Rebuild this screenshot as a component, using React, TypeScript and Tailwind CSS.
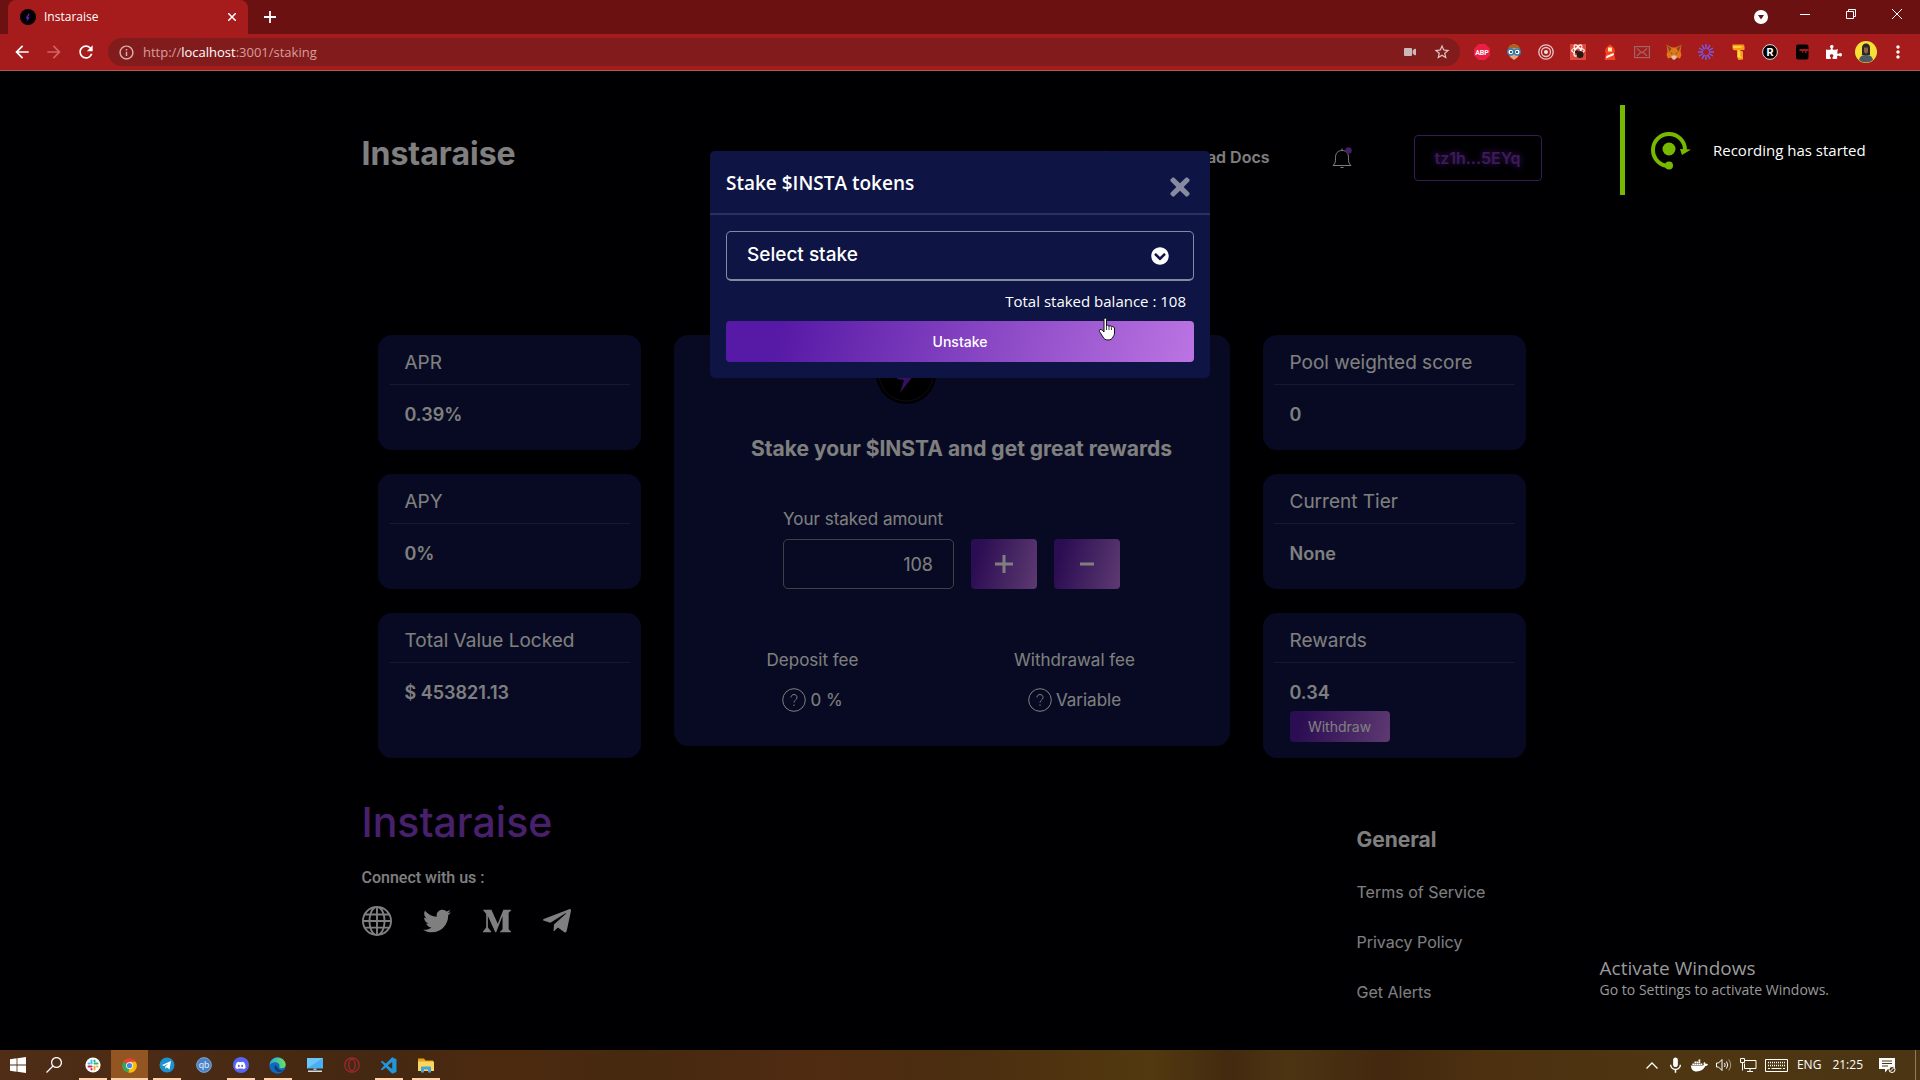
import {useState} from "react";
import type {ReactNode} from "react";

import {BsGlobe} from "react-icons/bs";
import {
  FaChevronCircleDown,
  FaDiscord,
  FaDocker,
  FaMediumM,
  FaPuzzlePiece,
  FaTelegramPlane,
  FaTimes,
  FaTwitter,
  FaVideo,
} from "react-icons/fa";
import {MdArrowBack, MdArrowForward, MdInfoOutline, MdMic, MdMoreVert, MdRefresh, MdStarBorder} from "react-icons/md";

const gradient = "bg-[linear-gradient(105deg,#571aa6_12%,#bb74e2_100%)]";

const extensions: {name: string; icon: ReactNode}[] = [
  {
    name: "Adblock Plus",
    icon: (
      <svg viewBox="0 0 16 16" className="size-4">
        <path d="M4.7 0h6.6L16 4.7v6.6L11.3 16H4.7L0 11.3V4.7z" fill="#ed1e45" />
        <text x="8" y="10.6" textAnchor="middle" fontSize="7" fontWeight="700" fill="#fff" fontFamily="Roboto">
          ABP
        </text>
      </svg>
    ),
  },
  {
    name: "Reader",
    icon: (
      <svg viewBox="0 0 16 16" className="size-4">
        <path d="M2.5 8C2 3 4 .5 8 .5S14 3 13.500 8L12 13l-4 3-4-3z" fill="#e5a878" />
        <path d="M2 7C1.500 2.500 4 .5 8 .5S14.500 2.500 14 7L12 4 6 4.500z" fill="#a5641f" />
        <circle cx="4.700" cy="8" r="3" fill="#fff" stroke="#2d7fb8" strokeWidth="1.500" />
        <circle cx="11.300" cy="8" r="3" fill="#fff" stroke="#2d7fb8" strokeWidth="1.500" />
        <circle cx="5" cy="8" r="1" fill="#123" />
        <circle cx="11" cy="8" r="1" fill="#123" />
      </svg>
    ),
  },
  {
    name: "Target",
    icon: (
      <svg viewBox="0 0 16 16" className="size-4" fill="none" stroke="#e8c6c6" strokeWidth="1.300">
        <circle cx="8" cy="8" r="7.200" />
        <circle cx="8" cy="8" r="4.500" />
        <circle cx="8" cy="8" r="2" fill="#f3dede" stroke="none" />
      </svg>
    ),
  },
  {
    name: "Debugger",
    icon: (
      <svg viewBox="0 0 16 16" className="size-4">
        <rect width="16" height="16" fill="#dc4a3c" />
        <g fill="none" stroke="#fff" strokeWidth="1.200">
          <ellipse cx="8" cy="6.500" rx="6.300" ry="2.500" />
          <ellipse cx="8" cy="6.500" rx="6.300" ry="2.500" transform="rotate(60 8 6.500)" />
          <ellipse cx="8" cy="6.500" rx="6.300" ry="2.500" transform="rotate(120 8 6.500)" />
        </g>
        <circle cx="10" cy="10.500" r="3.500" fill="#2b1512" />
        <circle cx="6.500" cy="8" r="1.700" fill="#2b1512" />
      </svg>
    ),
  },
  {
    name: "Lighthouse",
    icon: (
      <svg viewBox="0 0 16 16" className="size-4">
        <path d="M3.500 4.500 8 .3l4.500 4.200V6.500h.5v2h-1l1.500 7.500h-11L4 8.500H3v-2h.5z" fill="#f4431f" />
        <rect x="6" y="3.500" width="4" height="4" fill="#ffe9a8" />
        <path d="m4.500 12 7-3 .4 2-7.800 3.600z" fill="#fff" />
      </svg>
    ),
  },
  {
    name: "Mail",
    icon: (
      <svg viewBox="0 0 16 16" className="size-4" fill="none" stroke="#a06467" strokeWidth="1.200">
        <rect x=".6" y="2.600" width="14.800" height="11" />
        <path d="m3 4.500 5 4.500 5-4.500M3 12l3.500-3.500M13 12 9.500 8.500" />
      </svg>
    ),
  },
  {
    name: "MetaMask",
    icon: (
      <svg viewBox="0 0 16 16" className="size-4">
        <path d="m.5.5 5.500 3h4l5.500-3-1 7 1 3.500-1.500 3.500-3.500-1L9 15.500H7l-1.500-2-3.500 1L.5 11l1-3.500z" fill="#e2761b" />
        <path d="m.5.5 5 4-2 3.500zM15.500.5l-5 4 2 3.500z" fill="#8a4a20" />
        <path d="m5 13 1.500-1.500h3L11 13l-2 2.500H7z" fill="#d9c3b3" />
        <path d="m4 8.500 2 .5.500 1.300zM12 8.500 10 9l-.5 1.300z" fill="#233447" />
      </svg>
    ),
  },
  {
    name: "Loom",
    icon: (
      <svg viewBox="0 0 16 16" className="size-4" stroke="#735cf5">
        <path d="M8 0v5M8 11v5M0 8h5M11 8h5" strokeWidth="1.400" />
        <path d="M4 1l2.500 4.400M9.500 10.600 12 15M12 1 9.500 5.400M6.500 10.600 4 15M1 4l4.400 2.500M10.600 9.500 15 12M1 12l4.400-2.500M10.600 6.500 15 4" strokeWidth="1.400" />
      </svg>
    ),
  },
  {
    name: "Temple",
    icon: (
      <svg viewBox="0 0 16 16" className="size-4">
        <path d="M2.500.5h11l1 1.500v4h-4v.5l2.500 1v8l-4.500.5-1.500-3V6.500L3.500 6l-1-1.500z" fill="#fb9b1c" />
        <path d="M3 3h8.500M8.500 6v6.500l3 1M9.500 7.500v5" stroke="#ffe04a" strokeWidth="1.300" fill="none" />
      </svg>
    ),
  },
  {
    name: "Rarity",
    icon: (
      <svg viewBox="0 0 16 16" className="size-4">
        <circle cx="8" cy="8" r="7.400" fill="#000" stroke="#e7d7d7" strokeWidth="1" />
        <text x="8" y="12" textAnchor="middle" fontSize="11" fontWeight="700" fill="#fff" fontFamily="Roboto">
          R
        </text>
      </svg>
    ),
  },
  {
    name: "Notes",
    icon: (
      <svg viewBox="0 0 16 16" className="size-4">
        <rect x="2" y=".5" width="12.500" height="15" rx="2" fill="#050202" />
        <path d="M5.500 5h9v2h-2v2h-1.500V7H9.500v1.500H8V7H5.500z" fill="#a01c1c" />
      </svg>
    ),
  },
];

const pinned: {name: string; open?: boolean; active?: boolean; icon: ReactNode}[] = [
  {
    name: "Slack",
    open: true,
    icon: (
      <svg viewBox="0 0 16 16" className="size-4">
        <circle cx="8" cy="8" r="7.600" fill="#fff" />
        <g strokeWidth="2" strokeLinecap="round">
          <path d="M6.500 3.500v3" stroke="#36c5f0" />
          <path d="M3.500 6.500h1" stroke="#36c5f0" />
          <path d="M9.500 6.500h3" stroke="#2eb67d" />
          <path d="M9.500 3.500v1" stroke="#2eb67d" />
          <path d="M9.500 9.500v3" stroke="#ecb22e" />
          <path d="M12 9.500h.5" stroke="#ecb22e" />
          <path d="M3.500 9.500h3" stroke="#e01e5a" />
          <path d="M6.500 12v.5" stroke="#e01e5a" />
        </g>
      </svg>
    ),
  },
  {
    name: "Chrome",
    open: true,
    active: true,
    icon: (
      <svg viewBox="0 0 16 16" className="size-[15px]">
        <path d="M8 8 1.500 4A7.600 7.600 0 0 1 14.600 4z" fill="#ea4335" />
        <path d="M8 8 1.400 4A7.600 7.600 0 0 0 7 15.600z" fill="#34a853" />
        <path d="M8 8V4h6.600A7.600 7.600 0 0 1 7 15.600z" fill="#fbbc05" />
        <circle cx="8" cy="8" r="3.600" fill="#fff" />
        <circle cx="8" cy="8" r="2.800" fill="#4285f4" />
      </svg>
    ),
  },
  {
    name: "Telegram",
    open: true,
    icon: (
      <svg viewBox="0 0 16 16" className="size-4">
        <circle cx="8" cy="8" r="7.500" fill="#1c93cf" />
        <path d="m3 8 9-4-1.500 8.500-2.700-2-1.300 1.300-.3-2.300L9.500 6.500 5 9z" fill="#fff" />
      </svg>
    ),
  },
  {
    name: "qBittorrent",
    icon: (
      <svg viewBox="0 0 16 16" className="size-4">
        <circle cx="8" cy="8" r="7.400" fill="#4a82c8" stroke="#8fb4e0" strokeWidth=".8" />
        <text x="8" y="11" textAnchor="middle" fontSize="9.500" fill="#dfeaf8" fontFamily="Lato">
          qb
        </text>
      </svg>
    ),
  },
  {
    name: "Discord",
    open: true,
    icon: (
      <span className="flex size-4 items-center justify-center rounded-full bg-[#5865f2] text-white">
        <FaDiscord size={11} />
      </span>
    ),
  },
  {
    name: "Edge",
    open: true,
    icon: (
      <svg viewBox="0 0 16 16" className="size-[17px]">
        <defs>
          <linearGradient id="edgeTop" x1="0" y1="0" x2="1" y2="0">
            <stop offset="0" stopColor="#2aa6e0" />
            <stop offset="1" stopColor="#6be35a" />
          </linearGradient>
        </defs>
        <circle cx="8" cy="8" r="7.700" fill="#1268bd" />
        <path d="M.4 7.500A7.700 7.700 0 0 1 15.700 7c0 3-2.500 4-5 3.500-1.500-.4-1-1.200-.7-2C10 6.500 8 5 6 5 3 5 1 6.500.4 7.500z" fill="url(#edgeTop)" />
        <path d="M6 7.500C4.500 9.500 5 13 9 14c2.500.5 4.500-.5 5.500-2-2.500 1-5.500.5-6-1.500z" fill="#0b3f7d" />
      </svg>
    ),
  },
  {
    name: "This PC",
    icon: (
      <svg viewBox="0 0 16 16" className="size-4">
        <rect x="0" y="1" width="16" height="10.500" fill="#46b0f2" />
        <path d="M0 11.500 16 1H0z" fill="#6cc6fa" />
        <path d="M6.500 11.500h3V13h-3z" fill="#aab8c2" />
        <path d="M1 13.500h14V15H1z" fill="#d5dde2" />
      </svg>
    ),
  },
  {
    name: "Opera",
    icon: (
      <svg viewBox="0 0 16 16" className="size-4" fill="none" stroke="#a92734" strokeWidth="1.200">
        <circle cx="8" cy="8" r="7.200" />
        <ellipse cx="8" cy="8" rx="3.200" ry="5.600" />
      </svg>
    ),
  },
  {
    name: "Visual Studio Code",
    open: true,
    icon: (
      <svg viewBox="0 0 16 16" className="size-[17px]">
        <path d="M11.500.3 15.500 2v12l-4 1.700L5.500 9.900 2 12.500.7 11.700 4 8 .7 4.300 2 3.500l3.500 2.600zM11.500 4.600 7.300 8l4.200 3.400z" fill="#2196dc" fillRule="evenodd" />
      </svg>
    ),
  },
  {
    name: "File Explorer",
    open: true,
    icon: (
      <svg viewBox="0 0 16 16" className="size-4">
        <path d="M0 1.500h6l1.500 2H15V6H0z" fill="#e5a316" />
        <path d="M0 4.500h16V14H0z" fill="#fbd65f" />
        <path d="M3 15.500V10.500Q3 9.500 4 9.500h8q1 0 1 1v5h-3V12.500H6v3z" fill="#45a3dd" />
      </svg>
    ),
  },
];

const socials = [
  {name: "Website", icon: <BsGlobe size={30} />},
  {name: "Twitter", icon: <FaTwitter size={28} />},
  {name: "Medium", icon: <FaMediumM size={30} />},
  {name: "Telegram", icon: <FaTelegramPlane size={32} />},
];

function BrowserBar() {
  return (
    <header className="font-['Open_Sans',sans-serif] text-white">
      <div className="flex h-[34px] items-center bg-[#6b1111] pl-2">
        <div className="flex h-full w-60 items-center rounded-t-lg bg-[#a61c1c] px-3">
          <Bolt className="size-4" />
          <span className="ml-2 flex-1 text-xs">Instaraise</span>
          <button aria-label="Close tab">
            <svg viewBox="0 0 8 8" className="size-2" stroke="currentColor" strokeWidth="1.500">
              <path d="m0 0 8 8M8 0 0 8" />
            </svg>
          </button>
        </div>
        <button aria-label="New tab" className="ml-4">
          <svg viewBox="0 0 12 12" className="size-3" stroke="currentColor" strokeWidth="1.800">
            <path d="M6 0v12M0 6h12" />
          </svg>
        </button>
        <button aria-label="Search tabs" className="mr-8 ml-auto">
          <svg viewBox="0 0 14 14" className="size-3.5">
            <circle cx="7" cy="7" r="7" fill="#fff" />
            <path d="M4 5h6L7 9.500z" fill="#6b1111" />
          </svg>
        </button>
        <div className="mr-[18px] mb-[6px] flex gap-9">
          <button aria-label="Minimize">
            <svg viewBox="0 0 10 10" className="size-2.5" stroke="currentColor">
              <path d="M0 5.500h10" />
            </svg>
          </button>
          <button aria-label="Restore">
            <svg viewBox="0 0 10 10" className="size-2.5" fill="none" stroke="currentColor">
              <path d="M.5 2.500h7v7h-7zM2.500 2.500v-2h7v7h-2" />
            </svg>
          </button>
          <button aria-label="Close">
            <svg viewBox="0 0 10 10" className="size-2.5" stroke="currentColor">
              <path d="m0 0 10 10M10 0 0 10" />
            </svg>
          </button>
        </div>
      </div>
      <div className="flex h-[37px] items-center border-b border-[#b4574f] bg-[#a61c1c] pl-3">
        <button aria-label="Back">
          <MdArrowBack size={20} />
        </button>
        <button aria-label="Forward" className="ml-3 text-[#d06464]">
          <MdArrowForward size={20} />
        </button>
        <button aria-label="Reload" className="ml-3">
          <MdRefresh size={20} />
        </button>
        <div className="ml-3 flex h-7 flex-1 items-center rounded-full bg-[#821c1c] pr-[9px] pl-2.5">
          <MdInfoOutline size={17} className="text-[#d9b3b3]" />
          <div
            role="textbox"
            aria-label="Address"
            contentEditable
            suppressContentEditableWarning
            className="ml-2 flex-1 text-[13px] leading-5 text-[#d99d9d] outline-none"
          >
            http://<span className="text-white">localhost</span>:3001/staking
          </div>
          <FaVideo size={12} className="mr-[17px] text-[#cbb9b9]" />
          <MdStarBorder size={18} className="text-[#e0c5c5]" />
        </div>
        <div className="ml-[14px] flex items-center gap-4">
          {extensions.map((ext) => (
            <button key={ext.name} aria-label={ext.name}>
              {ext.icon}
            </button>
          ))}
          <button aria-label="Extensions">
            <FaPuzzlePiece size={16} />
          </button>
        </div>
        <button aria-label="Profile" className="ml-[13px]">
          <svg viewBox="0 0 22 22" className="size-[22px]">
            <circle cx="11" cy="11" r="11" fill="#f6df36" />
            <path d="M4 19c1-4 3-5 7-5s6 1 7 5a11 11 0 0 1-14 0z" fill="#4d5a63" />
            <path d="M7 14V7c0-3 1.500-4.500 4-4.500S15 4 15 7v7z" fill="#2d2521" />
            <path d="M9 6.500h4V11l-2 2-2-2z" fill="#8b6248" />
          </svg>
        </button>
        <button aria-label="Menu" className="mr-3 ml-[11px]">
          <MdMoreVert size={20} />
        </button>
      </div>
    </header>
  );
}

function Bolt({className}: {className: string}) {
  return (
    <svg viewBox="0 0 60 60" className={className}>
      <circle cx="30" cy="30" r="30" fill="#000" />
      <circle cx="30" cy="30" r="27" fill="none" stroke="#1f1830" strokeWidth="1" />
      <path d="M33 16 21 35l7 1-4 13 13-17-7-1 6-11z" fill="#6a22c4" />
    </svg>
  );
}

function StatCard({title, value, children}: {title: string; value: string; children?: ReactNode}) {
  return (
    <section className="min-h-[115px] rounded-[14px] bg-[#0e1444] px-[11px] last:min-h-[145px]">
      <h3 className="border-b border-[#2b3060] px-4 pt-3.5 pb-[7px] text-[19px] leading-7">{title}</h3>
      <div className="px-4 pt-4">
        <p className="text-lg leading-7 font-semibold">{value}</p>
        {children}
      </div>
    </section>
  );
}

function Fee({label, value}: {label: string; value: string}) {
  return (
    <div className="flex flex-1 flex-col items-center gap-4">
      <p>{label}</p>
      <p className="flex items-center gap-1">
        <svg viewBox="0 0 24 24" className="size-6" fill="none" stroke="currentColor">
          <circle cx="12" cy="12" r="11.300" />
          <path d="M9 9.500c0-4 6-4 6 0 0 2.500-3 2.500-3 5M12 16.500v1.500" />
        </svg>
        {value}
      </p>
    </div>
  );
}

function StakingPage() {
  return (
    <div className="pr-[17px] font-[Inter,sans-serif] text-white">
      <div className="mx-auto max-w-[1180px]">
        <div className="flex items-start justify-between pt-16">
          <h1 className="text-[32px] leading-[38px] font-bold">Instaraise</h1>
          <nav className="flex h-[46px] items-center gap-[60px] font-semibold">
            <a href="#pools" className="pb-0.5">
              Pools
            </a>
            <a href="#staking" className="pb-0.5 text-[#9a4fe0]">
              Staking
            </a>
            <a href="#docs" className="pb-0.5">
              Read Docs
            </a>
            <button aria-label="Notifications" className="flex w-6 justify-center">
              <svg viewBox="0 0 20 22" className="h-[22px] w-5" fill="none" stroke="currentColor">
                <path d="M1 18.500h18c-2.500-2-2.500-4-2.500-8 0-4.500-2.500-7-6.500-7s-6.500 2.500-6.500 7c0 4 0 6-2.500 8zM10 3.500v-2M8.500 20.500h3" />
                <circle cx="16.500" cy="3.500" r="3.200" fill="#8a3fd0" stroke="none" />
              </svg>
            </button>
            <button className="h-[46px] w-32 rounded border border-[#6c36a8] text-[#7a35b5] [text-shadow:0_0_6px_#7a2fc4]">
              tz1h...5EYq
            </button>
          </nav>
        </div>

        <main className="mt-[154px] flex items-start gap-[33px] px-4">
          <div className="flex w-[263px] flex-col gap-6">
            <StatCard title="APR" value="0.39%" />
            <StatCard title="APY" value="0%" />
            <StatCard title="Total Value Locked" value="$ 453821.13" />
          </div>
          <section className="flex flex-1 flex-col rounded-[14px] bg-[#0e1444] px-2 pt-[9px] pb-[34px]">
            <div className="flex items-start justify-center gap-2">
              <Bolt className="size-[60px]" />
              <span className="mt-2 leading-7">Compound</span>
            </div>
            <h2 className="mt-[31px] pl-5 text-center text-[21px] leading-7 font-bold">
              Stake your $INSTA and get great rewards
            </h2>
            <div className="mx-auto mt-11">
              <label htmlFor="amount" className="block text-[17px] leading-6">
                Your staked amount
              </label>
              <div className="mt-2 flex gap-[17px]">
                <input
                  id="amount"
                  readOnly
                  value="108"
                  className="h-[50px] w-[171px] rounded-[5px] border border-[#80838f] pr-5 text-right text-lg"
                />
                <button aria-label="Stake more" className={`${gradient} flex h-[50px] w-[66px] items-center justify-center rounded`}>
                  <svg viewBox="0 0 18 18" className="size-[18px]" stroke="currentColor" strokeWidth="3">
                    <path d="M9 0v18M0 9h18" />
                  </svg>
                </button>
                <button aria-label="Unstake" className={`${gradient} flex h-[50px] w-[66px] items-center justify-center rounded`}>
                  <svg viewBox="0 0 18 18" className="size-[18px]" stroke="currentColor" strokeWidth="3">
                    <path d="M2 9h14" />
                  </svg>
                </button>
              </div>
            </div>
            <div className="mt-[59px] mr-4 flex text-[17px] leading-6">
              <Fee label="Deposit fee" value="0 %" />
              <Fee label="Withdrawal fee" value="Variable" />
            </div>
          </section>
          <div className="flex w-[263px] flex-col gap-6">
            <StatCard title="Pool weighted score" value="0" />
            <StatCard title="Current Tier" value="None" />
            <StatCard title="Rewards" value="0.34">
              <button className={`${gradient} mt-1 h-[31px] w-[100px] rounded text-sm`}>Withdraw</button>
            </StatCard>
          </div>
        </main>

        <footer className="flex justify-between pt-11">
          <div>
            <p className="text-[41px] leading-10 font-medium text-[#9040d8]">Instaraise</p>
            <p className="mt-6 font-[Roboto,sans-serif] font-medium">Connect with us :</p>
            <div className="mt-[15px] flex items-center gap-[30px]">
              {socials.map((social) => (
                <a key={social.name} href="#social" aria-label={social.name} className="flex w-[30px] justify-center">
                  {social.icon}
                </a>
              ))}
            </div>
          </div>
          <div className="w-[185px] pt-6">
            <h4 className="text-[21px] leading-7 font-bold">General</h4>
            <ul className="mt-[26px] flex flex-col gap-[26px]">
              <li>
                <a href="#terms">Terms of Service</a>
              </li>
              <li>
                <a href="#privacy">Privacy Policy</a>
              </li>
              <li>
                <a href="#alerts">Get Alerts</a>
              </li>
            </ul>
          </div>
        </footer>
      </div>
    </div>
  );
}

function UnstakeModal({onClose}: {onClose: () => void}) {
  return (
    <div className="absolute inset-0 flex items-start justify-center bg-black/50 pt-20">
      <div role="dialog" aria-labelledby="modal-title" className="relative w-[500px] rounded-[5px] bg-[#0e1444] text-white">
        <div className="flex items-center justify-between border-b-2 border-[#2b3060] px-4 pt-5 pb-2.5">
          <h2 id="modal-title" className="pb-2 font-['Open_Sans',sans-serif] text-[19px] leading-6 font-semibold">
            Stake $INSTA tokens
          </h2>
          <button aria-label="Close" onClick={onClose} className="text-[#878aa1]">
            <FaTimes size={28} />
          </button>
        </div>
        <div className="px-4 pt-4 pb-4">
          <button className="flex h-[50px] w-full items-center justify-between rounded-[5px] border border-b-2 border-[#868a9e] pr-6 pl-5 font-[Inter,sans-serif] text-[19px] font-medium">
            Select stake
            <FaChevronCircleDown size={18} />
          </button>
          <p className="mt-2 mb-2 pr-2 text-right font-['Open_Sans',sans-serif] text-[15px] leading-6">
            Total staked balance : 108
          </p>
          <button className={`${gradient} h-[41px] w-full rounded font-[Inter,sans-serif] text-sm font-medium`}>
            Unstake
          </button>
        </div>
        <svg viewBox="0 0 18 24" className="absolute top-[166px] left-[388px] h-6 w-[18px]">
          <path
            d="M6 2.500Q6 1 7.200 1T8.500 2.500V9q0-1 1.200-1t1.300 1.500q.2-1 1.300-.8t1.200 1.500q.2-.8 1.300-.6T16.500 11v5c0 2-1 3-1.500 4-.8 2-2.500 3-5 3s-4-1-5-3L1.500 14.500Q1 13 2 12.500t2.300.8L6 15z"
            fill="#fff"
            stroke="#111"
          />
          <path d="M8.500 9v4M11 9.500v3.500M13.500 10.500V13" stroke="#111" strokeWidth=".8" />
        </svg>
      </div>
    </div>
  );
}

function Taskbar() {
  return (
    <footer className="flex h-[30px] items-center bg-[linear-gradient(90deg,#4f2d17_0%,#452811_20%,#4c2a10_26%,#46290f_33%,#4f2b12_42%,#4b2d10_50%,#52390f_60%,#432a10_64%,#4c3412_67%,#43280f_72%,#4c3010_77%,#4f3612_88%,#4b3513_100%)] font-['Open_Sans',sans-serif] text-xs text-white">
      <button aria-label="Start" className="flex w-9 justify-center">
        <svg viewBox="0 0 16 16" className="size-4" fill="currentColor">
          <path d="M0 2.200 6.600 1.300V7.600H0zM7.400 1.200 16 0v7.600H7.400zM0 8.400h6.600v6.300L0 13.800zM7.400 8.400H16V16l-8.600-1.200z" />
        </svg>
      </button>
      <button aria-label="Search" className="flex w-9 justify-center">
        <svg viewBox="0 0 16 16" className="size-4" fill="none" stroke="currentColor" strokeWidth="1.300">
          <circle cx="10.500" cy="5.500" r="4.900" />
          <path d="m7 9-6.500 6.500" />
        </svg>
      </button>
      <div className="ml-0.5 flex h-full">
        {pinned.map((app) => (
          <button
            key={app.name}
            aria-label={app.name}
            className={`flex h-full w-[37px] flex-col items-center justify-between ${app.active ? "bg-[#935623]" : ""}`}
          >
            <span className="flex h-[30px] items-center">{app.icon}</span>
            <span className={`-mt-0.5 h-0.5 shrink-0 ${app.active ? "w-full" : "w-7"} ${app.open ? "bg-[#ffd2ad]" : ""}`} />
          </button>
        ))}
      </div>
      <div className="ml-auto flex h-full items-center">
        <svg viewBox="0 0 12 7" className="h-[7px] w-3" fill="none" stroke="currentColor" strokeWidth="1.300">
          <path d="m.5 6.500 5.500-5.500 5.500 5.500" />
        </svg>
        <MdMic size={19} className="ml-2" />
        <FaDocker size={17} className="ml-1.5" />
        <svg viewBox="0 0 16 14" className="ml-2 h-3.5 w-4" fill="none" stroke="currentColor">
          <path d="M.5 5h2l3.500-3.500v11L2.500 9h-2zM8.500 5q1.300 2 0 4M10.500 3.500q2.500 3.500 0 7" />
          <path d="M12.700 1.500q4 5.500 0 11" opacity=".5" />
        </svg>
        <svg viewBox="0 0 17 14" className="ml-2 h-3.5 w-[17px]" fill="none" stroke="currentColor">
          <path d="M4.500 2.500h11.500v8H4.500v-5M.5.500h4v4h-4zM2.500 4.500v8M7 13.500h6M10 10.500v3" />
        </svg>
        <svg viewBox="0 0 23 13" className="ml-2 h-[13px] w-[23px]" fill="none" stroke="currentColor">
          <path d="M.5.500h22v12H.5z" />
          <path d="M3 3.500h17M3 6.500h17" strokeDasharray="1 1" strokeWidth="1.500" />
          <path d="M3 9.500h2M6.500 9.500h10M18 9.500h2" />
        </svg>
        <span className="ml-[9px]">ENG</span>
        <span className="ml-[11px]">21:25</span>
        <svg viewBox="0 0 17 17" className="ml-4 size-[17px]">
          <path d="M0 1h16v11H9l-3 3.500V12H0z" fill="#fff" />
          <path d="M3 4h10M3 6.500h10M3 9h6" stroke="#4b3513" />
          <circle cx="13" cy="12.500" r="3" fill="#4b3513" stroke="#fff" />
          <path d="m11 14.500 4-4" stroke="#fff" />
        </svg>
        <span className="mr-1 ml-[19px] h-full w-px bg-[#8d7c62]" />
      </div>
    </footer>
  );
}

export default function App() {
  const [open, setOpen] = useState(true);

  return (
    <div className="flex min-h-screen flex-col bg-[#000006]">
      <BrowserBar />
      <div className="relative flex-1">
        <StakingPage />
        {open && <UnstakeModal onClose={() => setOpen(false)} />}

        <div
          role="status"
          className="absolute top-[34px] right-0 flex h-[90px] w-[300px] items-center border-l-[5px] border-[#76b900] bg-black pl-[26px] font-['Open_Sans',sans-serif] text-white"
        >
          <svg viewBox="0 0 40 40" className="size-10" fill="none" stroke="#76b900">
            <path d="M18 36A16 16 0 1 1 34 20" strokeWidth="4" />
            <circle cx="18" cy="19" r="6.500" fill="#76b900" stroke="none" />
            <path d="M29 19 40 19.500 31 25z" fill="#76b900" stroke="none" />
            <circle cx="18" cy="35.500" r="4" fill="#76b900" stroke="none" />
          </svg>
          <span className="ml-[22px] text-[15px]">Recording has started</span>
        </div>

        <div className="absolute right-[91px] bottom-[50px] font-['Open_Sans',sans-serif] text-[#9a9a9a]">
          <p className="text-[19px] leading-6">Activate Windows</p>
          <p className="text-sm leading-5">Go to Settings to activate Windows.</p>
        </div>
      </div>
      <Taskbar />
    </div>
  );
}
